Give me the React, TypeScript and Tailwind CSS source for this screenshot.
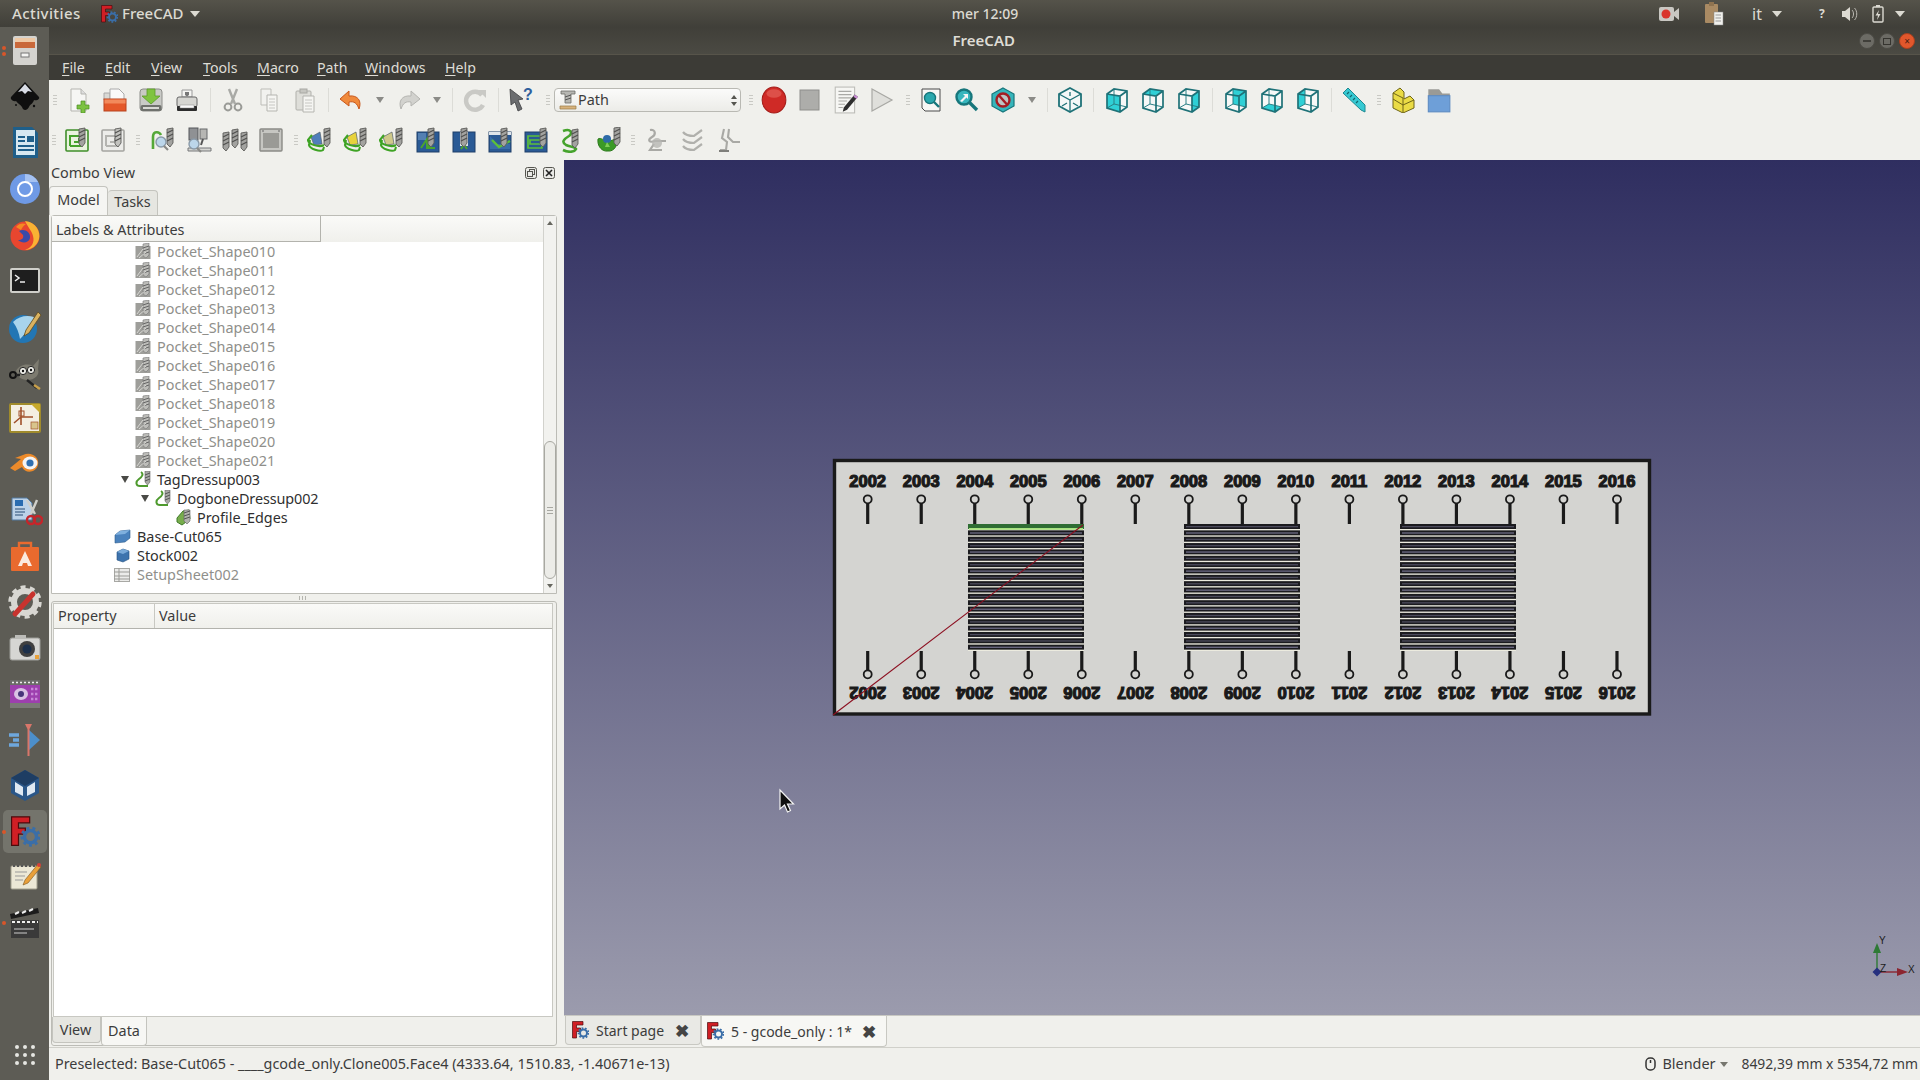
import type { ReactNode } from 'react';

const Svg = ({ size = 26, children }: { size?: number; children: ReactNode }) => (
    <svg width={size} height={size} viewBox="0 0 26 26">{children}</svg>
);

const DrillBit = ({ x = 16, y = 1, gray = '#a3a3a0' }: { x?: number; y?: number; gray?: string }) => (
    <g transform={`translate(${x} ${y})`}>
        <path d="M0 1 L6 0 L6 15 L3 19 L0 16 Z" fill={gray} stroke="#5c5c5a" strokeWidth="0.9" />
        <path d="M0 5 L6 2 M0 9 L6 6 M0 13 L6 10" stroke="#4f4f4d" strokeWidth="1.1" />
    </g>
);

const FcLogo = ({ size = 18 }: { size?: number }) => (
    <svg width={size} height={size} viewBox="0 0 36 36">
        <path d="M3 1 H24 V8 H11 V14 H19 V21 H11 V34 H3 Z" fill="#d01f25" stroke="#4a0c0e" strokeWidth="1.4" />
        <circle cx="25" cy="24" r="7" fill="none" stroke="#3a6ea8" strokeWidth="4" />
        <circle cx="25" cy="24" r="10" fill="none" stroke="#3a6ea8" strokeWidth="3.4" strokeDasharray="3.4 3.6" />
    </svg>
);

// toolbar row 1
const NewIco = () => (
    <Svg><path d="M5 2 H15 L20 7 V24 H5 Z" fill="#f6f6f4" stroke="#b5b5b0" /><path d="M15 2 V7 H20" fill="#ddd" stroke="#b5b5b0" /><path d="M15 14 H19 V18 H23 V22 H19 V26 H15 V22 H11 V18 H15 Z" fill="#7cc242" stroke="#4c8c22" strokeWidth="0.7" /></Svg>
);
const OpenIco = () => (
    <Svg><path d="M2 6 H8 V13 H2 Z" fill="#d9d9d5" stroke="#aaa" /><path d="M8 2 H17 L22 7 V13 H8 Z" fill="#fafafa" stroke="#aaa" /><rect x="2" y="12" width="22" height="12" fill="#e4582a" stroke="#b8431e" /><rect x="2.5" y="12.5" width="21" height="4" fill="#f28a5c" /></Svg>
);
const SaveIco = () => (
    <Svg><rect x="2" y="2" width="22" height="22" rx="3" fill="#c9cac6" stroke="#8d8e8a" /><rect x="2.5" y="18" width="21" height="6" rx="2" fill="#6f716d" /><rect x="5" y="20" width="16" height="2" fill="#d8d8d4" /><path d="M9 2 H17 V9 H22 L13 17 L4 9 H9 Z" fill="#7fc440" stroke="#5a9a28" strokeWidth="0.8" /></Svg>
);
const PrintIco = () => (
    <Svg><path d="M8 3 H18 V10 H8 Z" fill="#f5f5f3" stroke="#999" /><path d="M11 5 H15 V8 L13 9.5 L11 8 Z" fill="#777" /><rect x="3" y="10" width="20" height="10" rx="2" fill="#d6d6d2" stroke="#666" /><rect x="3" y="19" width="20" height="5" rx="1" fill="#2c2c2c" /><rect x="6" y="18" width="14" height="3" fill="#fafafa" stroke="#888" strokeWidth="0.5" /></Svg>
);
const CutIco = () => (
    <Svg><path d="M9 2 L15 17 M17 2 L11 17" stroke="#a9aaa6" strokeWidth="2.4" /><circle cx="8" cy="20" r="3.4" fill="none" stroke="#9a9b97" strokeWidth="2" /><circle cx="18" cy="20" r="3.4" fill="none" stroke="#9a9b97" strokeWidth="2" /></Svg>
);
const CopyIco = () => (
    <Svg><path d="M5 2 H15 V18 H5 Z" fill="#f2f2ef" stroke="#bdbdb8" /><path d="M11 8 H21 V24 H11 Z" fill="#f5f5f2" stroke="#b5b5b0" /><path d="M13 12 H19 M13 15 H19 M13 18 H19 M13 21 H19" stroke="#c6c6c2" /></Svg>
);
const PasteIco = () => (
    <Svg><rect x="4" y="4" width="15" height="19" rx="1" fill="#deded9" stroke="#b0b0ab" /><rect x="8" y="2" width="7" height="4" fill="#c6c6c1" stroke="#a8a8a3" /><path d="M11 9 H22 V25 H11 Z" fill="#f5f5f2" stroke="#b5b5b0" /><path d="M13 13 H20 M13 16 H20 M13 19 H20 M13 22 H20" stroke="#c6c6c2" /></Svg>
);
const UndoIco = ({ on }: { on?: boolean }) => (
    <Svg><path d="M11 4 L2 12 L11 19 V15 C16 14 19 16 21 22 C24 14 20 8 11 9 Z" fill={on ? '#f08a3c' : '#d2d2ce'} stroke={on ? '#c8561a' : '#b4b4b0'} /></Svg>
);
const RedoIco = () => (
    <Svg><path d="M15 4 L24 12 L15 19 V15 C10 14 7 16 5 22 C2 14 6 8 15 9 Z" fill="#d2d2ce" stroke="#b4b4b0" /></Svg>
);
const RefreshIco = () => (
    <Svg><path d="M20 8 A9 9 0 1 0 21 18" fill="none" stroke="#c9c9c5" strokeWidth="4.5" /><path d="M16 3 H24 V11 Z" fill="#c9c9c5" /></Svg>
);
const WhatIco = () => (
    <Svg><path d="M2 2 L15 12 L10 13 L14 22 L10 24 L7 15 L3 18 Z" fill="#6b6d6f" stroke="#3d3f41" strokeWidth="0.8" /><text x="15" y="13" fontSize="16" fontWeight="700" fill="#2f5f9c" fontFamily="'Liberation Sans', sans-serif">?</text></Svg>
);
const RecordIco = () => (
    <Svg size={28}><ellipse cx="13" cy="13" rx="11" ry="12" fill="#cf2a26" stroke="#a51d1a" /><ellipse cx="13" cy="7" rx="7" ry="4" fill="#e66a60" opacity="0.6" /></Svg>
);
const StopIco = () => (
    <Svg><rect x="3" y="3" width="19" height="20" fill="#adadaa" stroke="#8e8e8b" /></Svg>
);
const EditIco = () => (
    <Svg size={28}><rect x="3" y="1" width="18" height="24" fill="#f6f6f3" stroke="#bdbdb8" /><path d="M6 5 H18 M6 8 H18 M6 11 H18 M6 14 H14 M6 17 H12 M6 20 H10" stroke="#a9a9a5" /><path d="M21 8 L24 10 L14 22 L10 24 L11 20 Z" fill="#2e2e2e" /><path d="M21 8 L24 10 L23 12 L20 10 Z" fill="#c58ad0" /></Svg>
);
const PlayIco = () => (
    <Svg><path d="M3 2 L23 13 L3 24 Z" fill="#dfdfdb" stroke="#a8a8a4" strokeWidth="1.2" /></Svg>
);
const FitAllIco = () => (
    <Svg><path d="M4 2 H22 V24 H7 L4 21 Z" fill="#f7f7f5" stroke="#4a4a4a" /><circle cx="12" cy="11" r="5.5" fill="#2aa8ae" stroke="#17767b" strokeWidth="1.4" /><path d="M16 15 L21 20" stroke="#17767b" strokeWidth="2.4" /></Svg>
);
const FitSelIco = () => (
    <Svg><circle cx="10" cy="10" r="7.5" fill="#37b6bd" stroke="#17767b" strokeWidth="2.4" /><path d="M15 15 L23 23" stroke="#17767b" strokeWidth="3.4" /><path d="M6 14 L11 9 L9 7 H14 V12 L12.5 10.5 L8 15 Z" fill="#f4f4f4" /></Svg>
);
const DrawStyleIco = () => (
    <Svg><path d="M13 1 L24 7 V19 L13 25 L2 19 V7 Z" fill="#36b5bb" stroke="#17767b" strokeWidth="1.2" /><circle cx="13" cy="13" r="6.5" fill="#bfc4c4" stroke="#a51c22" strokeWidth="2.4" /><path d="M9 8.5 L17 17.5" stroke="#a51c22" strokeWidth="2.4" /></Svg>
);
type Face = 'none' | 'front' | 'top' | 'right' | 'rear' | 'bottom' | 'left';
const Cube = ({ face = 'none' }: { face?: Face }) => {
    const faces: Record<Face, string> = {
        none: '',
        front: '3,7 16,9 16,25 3,21',
        top: '3,7 10,2 23,4 16,9',
        right: '16,9 23,4 23,20 16,25',
        rear: '10,2 23,4 23,20 10,17',
        bottom: '3,21 10,17 23,20 16,25',
        left: '3,7 10,2 10,17 3,21',
    };
    return (
        <Svg>
            <path d="M3 7 L10 2 L23 4 V20 L16 25 L3 21 Z" fill="#f7f8f7" />
            {face !== 'none' && <polygon points={faces[face]} fill="#2fd0d6" />}
            <path d="M10 2 V17 L3 21 M10 17 L23 20" stroke="#2a8086" strokeWidth="1" fill="none" />
            <path d="M3 7 L10 2 L23 4 V20 L16 25 L3 21 Z M3 7 L16 9 L23 4 M16 9 V25" stroke="#1f7278" strokeWidth="1.7" fill="none" />
        </Svg>
    );
};
const IsoIco = () => (
    <Svg><path d="M13 1 L24 7 V19 L13 25 L2 19 V7 Z" fill="#f4f8f8" stroke="#1f7278" strokeWidth="1.8" /><path d="M2 7 L13 13 L24 7 M13 13 V25 M5 19 L10 16 M21 19 L16 16 M13 5 V9" stroke="#1f7278" strokeWidth="1.3" fill="none" /></Svg>
);
const MeasureIco = () => (
    <Svg><path d="M2 6 L7 1 L24 18 V25 L20 23 Z" fill="#36c9d3" stroke="#1d8890" /><path d="M6 7 L8 5 M9 10 L11 8 M12 13 L14 11 M15 16 L17 14" stroke="#14666c" strokeWidth="1.2" /></Svg>
);
const PartIco = () => (
    <Svg><path d="M4 6 L11 1 L15 5 V12 L21 9 L25 13 V21 L14 26 L4 21 Z" fill="#eadb45" stroke="#6e6518" /><path d="M4 12 L14 18 L25 13 M14 18 V26 M4 6 L14 11 V18" stroke="#6e6518" fill="none" /></Svg>
);
const FolderIco = () => (
    <Svg size={28}><path d="M4 3 H14 L17 7 H24 V12 H4 Z" fill="#9a9a96" /><rect x="4" y="9" width="20" height="15" fill="#6e9fd8" stroke="#5d8bc2" /></Svg>
);

// toolbar row 2
const JobIco = ({ on }: { on?: boolean }) => (
    <Svg>
        <rect x="2" y="3" width="22" height="21" rx="1" fill={on ? '#e9f3de' : '#ecece9'} stroke={on ? '#3f8e2a' : '#a4a4a0'} strokeWidth="1.6" />
        <path d="M6 19 V9 H16 M6 19 H17 M10 15 H15 V11" fill="none" stroke={on ? '#45a32c' : '#b4b4b0'} strokeWidth="2" />
        <DrillBit x={15} y={1} gray={on ? '#a3a3a0' : '#c2c2be'} />
    </Svg>
);
const Glass = ({ x = 10, y = 16 }: { x?: number; y?: number }) => (
    <g>
        <circle cx={x} cy={y} r="5" fill="#bcd6ea" stroke="#8a9aa8" strokeWidth="1.4" />
        <path d={`M${x + 3} ${y + 4} L${x + 7} ${y + 8}`} stroke="#8a8a86" strokeWidth="2.2" />
    </g>
);
const InspectIco = () => (
    <Svg><path d="M3 22 V10 C3 4 9 4 11 8" fill="none" stroke="#54a838" strokeWidth="2.6" /><DrillBit x={17} y={1} /><Glass x={11} y={15} /></Svg>
);
const MachineIco = () => (
    <Svg><rect x="3" y="1" width="9" height="12" fill="#8f9194" stroke="#55575a" /><rect x="14" y="2" width="7" height="10" fill="#b6b6b3" stroke="#66686b" /><path d="M17 12 L15 18" stroke="#555" strokeWidth="2" /><path d="M2 24 H25 V21 H2 Z" fill="#d6d6d2" stroke="#77787a" /><Glass x={8} y={17} /></Svg>
);
const ToolsIco = () => (
    <Svg><DrillBit x={1} y={5} /><DrillBit x={10} y={2} /><DrillBit x={19} y={5} /></Svg>
);
const StockIco = () => (
    <Svg><rect x="2" y="2" width="22" height="22" rx="1" fill="#c6c6c2" stroke="#8a8a86" strokeWidth="1.4" /><rect x="5" y="6" width="16" height="15" fill="#9a9a96" /><path d="M4 4 H6 M20 4 H22" stroke="#666" /></Svg>
);
const StackIco = ({ fill }: { fill: string }) => (
    <Svg>
        <path d="M4 10 L13 5 L15 17 L7 18 Z" fill={fill} stroke="#55606a" strokeWidth="0.7" />
        <path d="M3 13 L2 18 C3 22 13 25 16 23 L17 20 M5 8 L1 13 C1 17 12 21 17 18" fill="none" stroke="#3ea324" strokeWidth="2.1" />
        <DrillBit x={17} y={1} />
    </Svg>
);
const BlueIco = ({ children }: { children: ReactNode }) => (
    <Svg><rect x="2" y="5" width="22" height="20" fill="#2a5a95" stroke="#1e3f68" />{children}</Svg>
);
const LoopIco = () => (
    <Svg><path d="M6 3 C12 2 12 8 8 10 C3 13 5 16 11 14 H22 M10 17 L6 23 H18" fill="none" stroke="#a9a9a5" strokeWidth="2.2" /><circle cx="13" cy="16" r="5" fill="#b7b7b3" opacity="0.8" /></Svg>
);
const LayersIco = () => (
    <Svg><path d="M3 5 C6 9 12 9 14 9 L22 3 M3 12 C6 16 12 16 14 16 L22 10 M3 19 C6 23 12 23 14 23 L22 17" fill="none" stroke="#b0b0ac" strokeWidth="2.2" /></Svg>
);
const BendIco = () => (
    <Svg><path d="M8 2 L6 11 L11 15 L10 23 H4 M13 2 L12 10 L17 15 H24" fill="none" stroke="#a9a9a5" strokeWidth="2.1" /><path d="M3 24 H13" stroke="#7f7f7b" strokeWidth="2" /></Svg>
);

const Tool = ({ children }: { children: ReactNode }) => (
    <div className="w-9 h-10 flex items-center justify-center shrink-0">{children}</div>
);
const Sep = ({ w = 'w-[10px]' }: { w?: string }) => (
    <div className={`${w} h-10 flex items-center justify-center shrink-0`}><div className="w-px h-[24px] bg-[#dcdcd7]" /></div>
);
const Drop = ({ w }: { w: string }) => (
    <div className={`${w} h-10 flex items-center justify-center shrink-0`}>
        <div className="w-0 h-0 border-l-[4px] border-r-[4px] border-t-[6px] border-l-transparent border-r-transparent border-t-[#8b8b87]" />
    </div>
);
const Grip = ({ w }: { w: string }) => (
    <div className={`${w} h-10 flex flex-col items-center justify-center gap-[2px] shrink-0`}>
        <div className="w-[4px] h-px bg-[#c9c9c4]" />
        <div className="w-[4px] h-px bg-[#c9c9c4]" />
        <div className="w-[4px] h-px bg-[#c9c9c4]" />
        <div className="w-[4px] h-px bg-[#c9c9c4]" />
    </div>
);

// dock
const DockSvg = ({ children }: { children: ReactNode }) => (
    <svg width="36" height="36" viewBox="0 0 36 36">{children}</svg>
);
const dockIcons: ReactNode[] = [
    <DockSvg key="files"><rect x="6" y="3" width="24" height="29" rx="2" fill="#d4d3cf" /><rect x="8" y="5" width="20" height="10" fill="#c9683a" /><rect x="8" y="5" width="20" height="4" fill="#efc9a5" /><rect x="14" y="20" width="8" height="4" fill="#f4f4f2" stroke="#777" /></DockSvg>,
    <DockSvg key="inkscape"><path d="M18 3 L32 18 C33 20 30 22 27 21 C26 25 23 25 22 28 C20 32 16 32 15 28 C13 25 11 25 9 22 C6 23 3 20 4 18 Z" fill="#0f0f0f" /><path d="M18 5 L25 13 L21 12 L18 15 L15 12 L11 13 Z" fill="#d9dde6" /><circle cx="9" cy="26" r="1" fill="#0f0f0f" /><circle cx="27" cy="27" r="1.2" fill="#0f0f0f" /></DockSvg>,
    <DockSvg key="writer"><path d="M6 2 H25 L31 8 V33 H6 Z" fill="#1f5f8a" /><rect x="9" y="5" width="19" height="25" fill="#d7e8f1" /><path d="M11 12 H18 M11 16 H18 M11 21 H27 M11 25 H27" stroke="#1f5f8a" strokeWidth="2" /><rect x="20" y="11" width="7" height="6" fill="#1f5f8a" /></DockSvg>,
    <DockSvg key="chromium"><circle cx="18" cy="18" r="15" fill="#6f9ae6" /><path d="M18 3 A15 15 0 0 1 31 11 H18 Z" fill="#a5c2f2" /><circle cx="18" cy="18" r="7" fill="#6f9ae6" stroke="#fff" strokeWidth="2" /></DockSvg>,
    <DockSvg key="firefox"><circle cx="18" cy="19" r="14.5" fill="#e8462f" /><path d="M18 4 C29 5 34 15 32 22 C30 29 24 33 18 33 C24 31 28 26 26 19 C25 14 22 12 18 4 Z" fill="#f9b233" /><path d="M12 14 C17 11 24 15 23 21 C22 26 15 27 11 23 C15 23 17 21 16 18 Z" fill="#3a4aa8" /><path d="M9 10 C12 6 16 6 19 7 C16 9 15 11 14 13 Z" fill="#f58a22" /></DockSvg>,
    <DockSvg key="terminal"><rect x="4" y="6" width="28" height="23" rx="1" fill="#1e1e1e" stroke="#cfcfca" strokeWidth="2" /><path d="M8 12 L12 15 L8 18" fill="none" stroke="#eee" strokeWidth="1.5" /><path d="M13 19 H18" stroke="#eee" strokeWidth="1.5" /></DockSvg>,
    <DockSvg key="scribus"><circle cx="16" cy="20" r="14" fill="#2276b4" /><path d="M6 13 C12 7 20 6 27 8 C25 17 19 24 13 30 C12 24 10 18 6 13 Z" fill="#a8d4ec" /><path d="M31 3 L34 6 L22 24 L17 27 L19 21 Z" fill="#d9b261" stroke="#5d4a20" strokeWidth="0.8" /></DockSvg>,
    <DockSvg key="gimp"><path d="M9 16 C12 10 20 8 26 11 L32 4 L31 14 C33 20 28 25 20 25 C14 25 10 21 9 16 Z" fill="#7d7b70" /><circle cx="16" cy="16" r="3.6" fill="#f0f0ea" stroke="#222" /><circle cx="24" cy="15" r="3.6" fill="#f0f0ea" stroke="#222" /><circle cx="16" cy="16" r="1.2" fill="#111" /><circle cx="24" cy="15" r="1.2" fill="#111" /><circle cx="6" cy="20" r="3" fill="none" stroke="#111" strokeWidth="2" /><path d="M9 20 H13 M20 25 L30 33" stroke="#222" strokeWidth="2.4" fill="none" /><path d="M27 30 L33 34" stroke="#c9a04a" strokeWidth="2.4" /></DockSvg>,
    <DockSvg key="kicad"><rect x="3" y="3" width="30" height="28" rx="1" fill="#f4efe2" stroke="#a08b2c" strokeWidth="2" /><path d="M24 3 H33 V12 Z" fill="#c7a92c" /><path d="M14 6 V24 M14 16 L7 22 M14 16 H26" stroke="#a0502a" strokeWidth="1.6" fill="none" /><rect x="12" y="10" width="5" height="5" fill="none" stroke="#a0502a" /><rect x="24" y="21" width="7" height="7" fill="#d8c48c" stroke="#a0502a" strokeWidth="0.7" /></DockSvg>,
    <DockSvg key="blender"><path d="M3 22 L14 13 L8 12 L16 9 C24 5 33 11 31 19 C29 27 18 28 15 21 L8 25 Z" fill="#ec8a2a" /><ellipse cx="23" cy="17" rx="7.5" ry="6.5" fill="#f4f4f4" /><circle cx="23" cy="17" r="3.6" fill="#2f6fb0" /></DockSvg>,
    <DockSvg key="diff"><path d="M5 6 H20 L25 11 V28 H5 Z" fill="#bcd2e8" stroke="#52799f" /><rect x="8" y="8" width="8" height="6" fill="#2a6cb0" /><path d="M8 17 H18 M8 20 H18 M8 23 H16" stroke="#5a7a9a" strokeWidth="1.6" /><path d="M20 8 L28 22 M30 8 L24 22" stroke="#cfcfca" strokeWidth="2.4" /><circle cx="24" cy="28" r="4" fill="none" stroke="#c5252a" strokeWidth="2.4" /><circle cx="31" cy="28" r="4" fill="none" stroke="#c5252a" strokeWidth="2.4" /></DockSvg>,
    <DockSvg key="software"><rect x="4" y="9" width="28" height="24" rx="1" fill="#e96a2e" /><path d="M12 9 V5 H24 V9" fill="none" stroke="#e96a2e" strokeWidth="2.4" /><path d="M18 13 L25 28 H21 L20 25 H16 L15 28 H11 Z" fill="#fbe9df" /></DockSvg>,
    <DockSvg key="settings"><circle cx="18" cy="18" r="11" fill="none" stroke="#d8d7d2" strokeWidth="6" /><circle cx="18" cy="18" r="15" fill="none" stroke="#d8d7d2" strokeWidth="3.4" strokeDasharray="5 4.4" /><path d="M8 30 L26 10" stroke="#c8332e" strokeWidth="5" strokeLinecap="round" /></DockSvg>,
    <DockSvg key="camera"><rect x="3" y="8" width="30" height="22" rx="2" fill="#d6d6d3" stroke="#9d9d99" /><rect x="8" y="5" width="11" height="4" fill="#bcbcb8" /><circle cx="20" cy="19" r="8" fill="#3f3f3f" /><circle cx="20" cy="19" r="4.5" fill="#1c2f4a" /><rect x="28" y="25" width="4" height="4" fill="#e8a13a" /></DockSvg>,
    <DockSvg key="video"><rect x="3" y="4" width="30" height="28" rx="1" fill="#9d3fae" /><rect x="3" y="4" width="30" height="5" fill="#6b6b68" /><rect x="3" y="27" width="30" height="5" fill="#7a7a76" /><path d="M5 6.5 H31" stroke="#eee" strokeWidth="1.6" strokeDasharray="2 2" /><ellipse cx="14" cy="18" rx="7" ry="6" fill="#d9c2e4" /><circle cx="14" cy="18" r="3" fill="#47357a" /><path d="M24 13 H31 M24 18 H31 M24 23 H31" stroke="#c888d8" strokeWidth="2.4" strokeDasharray="2.4 1.6" /></DockSvg>,
    <DockSvg key="etcher"><path d="M2 13 H12 M6 18 H12 M2 23 H12" stroke="#6ea7dd" strokeWidth="3.6" /><path d="M22 8 L33 18 L22 28 Z" fill="#4c8fcb" /><path d="M18 2 H25 L22.5 7 V34 H20.5 V7 Z" fill="#d9766a" /></DockSvg>,
    <DockSvg key="vbox"><path d="M18 2 L32 10 V25 L18 33 L4 25 V10 Z" fill="#2a5688" /><path d="M18 2 L32 10 L18 18 L4 10 Z" fill="#1e3d63" /><path d="M8 14 L16 19 V28 L8 24 Z M28 14 L20 19 V28 L28 24 Z" fill="#dfe8f2" /></DockSvg>,
    <div key="freecad" className="w-[44px] h-[43px] rounded-[5px] bg-[#74746c] flex items-center justify-center"><FcLogo size={31} /></div>,
    <DockSvg key="notes"><rect x="4" y="7" width="26" height="23" rx="1" fill="#ece8d6" stroke="#a3a08f" /><path d="M6 7 H29" stroke="#555" strokeWidth="2" strokeDasharray="2 2" /><path d="M8 13 H20 M8 17 H18 M8 21 H16" stroke="#999" /><path d="M31 5 L34 8 L21 24 L16 26 L18 21 Z" fill="#e9a03a" stroke="#7a5420" strokeWidth="0.6" /><circle cx="32" cy="6" r="2" fill="#d5403a" /></DockSvg>,
    <DockSvg key="clapper"><path d="M3 9 L31 3 L32 8 L4 14 Z" fill="#1c1c1c" /><path d="M8 9 L12 7 M15 8 L19 6 M22 6 L26 4" stroke="#eee" strokeWidth="2" /><rect x="4" y="15" width="28" height="18" fill="#3a3a3a" /><path d="M5 17 H31" stroke="#eee" strokeWidth="2" strokeDasharray="3 2" /><path d="M7 24 H27 M7 28 H20" stroke="#ccc" /></DockSvg>,
];

const menus = [
    { label: 'File', cls: 'w-[43px]' },
    { label: 'Edit', cls: 'w-[46px]' },
    { label: 'View', cls: 'w-[52px]' },
    { label: 'Tools', cls: 'w-[54px]' },
    { label: 'Macro', cls: 'w-[60px]' },
    { label: 'Path', cls: 'w-[48px]' },
    { label: 'Windows', cls: 'w-[80px]' },
    { label: 'Help', cls: 'w-[40px]' },
];

const PocketIcon = () => (
    <svg width="16" height="17" viewBox="0 0 16 17">
        <rect x="0.5" y="3" width="15" height="13" fill="#9e9e9a" />
        <path d="M8 1 L14 0 V12 L11 15 L8 13 Z" fill="#bdbdb9" stroke="#777" strokeWidth="0.6" />
        <path d="M8 5 L14 3 M8 8 L14 6 M8 11 L14 9" stroke="#666" />
        <path d="M2 14 L8 6 M4 15 L11 9" stroke="#d8d8d4" />
    </svg>
);
const DressIcon = () => (
    <svg width="16" height="18" viewBox="0 0 16 18">
        <path d="M6 1 C9 3 7 6 4 8 C0 11 1 15 5 15 H13" fill="none" stroke="#4e9a2e" strokeWidth="2" />
        <path d="M10 0 H15 V11 L12.5 14 L10 11 Z" fill="#a9a9a6" stroke="#666" strokeWidth="0.6" />
        <path d="M10 4 L15 2 M10 7 L15 5 M10 10 L15 8" stroke="#555" />
    </svg>
);
const ProfileIcon = () => (
    <svg width="16" height="18" viewBox="0 0 16 18">
        <path d="M2 9 L8 2 L14 1 L15 10 L7 16 L2 13 Z" fill="#78ad4d" stroke="#3f7a28" />
        <path d="M9 1 H15 V12 L12 15 L9 12 Z" fill="#b2b2ae" stroke="#666" strokeWidth="0.6" />
        <path d="M9 4 L15 2 M9 7 L15 5 M9 10 L15 8" stroke="#555" />
    </svg>
);
const SlabIcon = () => (
    <svg width="17" height="15" viewBox="0 0 17 15">
        <path d="M1 6 L6 2 L16 1 V9 L11 13 L1 14 Z" fill="#4a82bd" stroke="#2c5a8c" strokeWidth="0.6" />
        <path d="M1 6 L6 2 L16 1 L11 5 Z" fill="#7fb0de" />
    </svg>
);
const BlockIcon = () => (
    <svg width="14" height="15" viewBox="0 0 14 15">
        <path d="M1 4 L7 1 L13 3 V11 L7 14 L1 12 Z" fill="#3d73ad" stroke="#27527f" strokeWidth="0.6" />
        <path d="M1 4 L7 1 L13 3 L7 6 Z" fill="#79a9d8" />
    </svg>
);
const SheetIcon = () => (
    <svg width="16" height="14" viewBox="0 0 16 14">
        <rect x="0.5" y="0.5" width="15" height="13" fill="#ececea" stroke="#a8a8a4" />
        <path d="M0 4 H16 M0 8 H16 M0 11 H16 M5 0 V14" stroke="#9b9b97" />
    </svg>
);

const pockets = ['010', '011', '012', '013', '014', '015', '016', '017', '018', '019', '020', '021'];

const Arrow = () => (
    <div className="w-0 h-0 border-l-[4px] border-r-[4px] border-t-[7px] border-l-transparent border-r-transparent border-t-[#4a4a46]" />
);

const SCALE_X = 53.52;
const years = Array.from({ length: 15 }, (_, i) => ({ year: 2002 + i, x: 867.7 + i * SCALE_X }));
const blocks = [968, 1184, 1400];
const stripes = Array.from({ length: 20 }, (_, i) => 524 + i * 6.35);

const Viewport = () => (
    <svg className="block w-full h-full" viewBox="564 160 1356 855">
        <defs>
            <linearGradient id="viewbg" x1="0" y1="0" x2="0" y2="1">
                <stop offset="0" stopColor="#2f2e60" />
                <stop offset="1" stopColor="#9b9bad" />
            </linearGradient>
        </defs>
        <rect x="564" y="160" width="1356" height="855" fill="url(#viewbg)" />
        <rect x="834.5" y="460.5" width="815" height="253.5" fill="#d4d4d1" stroke="#1a1a1a" strokeWidth="3.4" />
        {blocks.map((bx, b) => (
            <g key={bx}>
                <rect x={bx} y={524} width={116} height={127} fill="#ecebdf" />
                {stripes.map((sy, i) => (
                    <g key={sy}>
                        <rect x={bx} y={sy} width={116} height={5} fill={b === 0 && i === 0 ? '#2f6d34' : '#1b1b1f'} />
                        {b === 0 && i === 0 ? (
                            <rect x={bx + 1} y={sy + 4} width={114} height={1.8} fill="#a6e27e" />
                        ) : (
                            <rect x={bx + 2} y={sy + 2} width={112} height={1.3} fill={i % 3 === 1 ? '#6e6c86' : '#4c4b5c'} />
                        )}
                    </g>
                ))}
            </g>
        ))}
        {years.map(({ year, x }) => (
            <g key={year}>
                <line x1={x} y1={503} x2={x} y2={524} stroke="#1a1a1a" strokeWidth="3.2" />
                <line x1={x} y1={651} x2={x} y2={670} stroke="#1a1a1a" strokeWidth="3.2" />
                <circle cx={x} cy={499.3} r={4} fill="#d4d4d1" stroke="#1a1a1a" strokeWidth="1.8" />
                <circle cx={x} cy={674.3} r={4} fill="#d4d4d1" stroke="#1a1a1a" strokeWidth="1.8" />
                <text x={x} y={486.5} textAnchor="middle" fontSize="16.5" fontWeight="700" fill="#1a1a1a" stroke="#1a1a1a" strokeWidth="1.2" fontFamily="'Liberation Sans', sans-serif">{year}</text>
                <text x={x} y={699} textAnchor="middle" fontSize="16.5" fontWeight="700" fill="#1a1a1a" stroke="#1a1a1a" strokeWidth="1.2" fontFamily="'Liberation Sans', sans-serif" transform={`rotate(180 ${x} 693)`}>{year}</text>
            </g>
        ))}
        <line x1="833" y1="715" x2="1083" y2="525" stroke="#8c0f20" strokeWidth="1.1" />
        {/* axis cross */}
        <g fontFamily="'Liberation Sans', sans-serif" fontSize="10" fill="#1c1c1c">
            <line x1="1877" y1="972" x2="1877" y2="948" stroke="#2e7a35" strokeWidth="1.4" />
            <path d="M1877 943 L1881 953 H1873 Z" fill="#2e7a35" />
            <line x1="1877" y1="972" x2="1900" y2="972" stroke="#8c2530" strokeWidth="1.4" />
            <path d="M1908 972 L1897 976 V968 Z" fill="#8c2530" />
            <path d="M1877 967.5 L1881.5 972 L1877 976.5 L1872.5 972 Z" fill="#26307f" />
            <text x="1879" y="944">Y</text>
            <text x="1908" y="973">X</text>
            <text x="1880" y="972">Z</text>
        </g>
        {/* pointer */}
        <path d="M780 790 V809 L784.5 805 L787.5 812 L790.5 810.5 L787.5 804 H793.5 Z" fill="#111" stroke="#f4f4f4" strokeWidth="1.2" />
    </svg>
);

export default function App() {
    const ui = "font-['Noto_Sans',sans-serif]";
    return (
        <div className={`w-[1920px] h-[1080px] flex flex-col overflow-hidden bg-[#f0f0ec] ${ui}`}>
            {/* gnome top bar */}
            <div className="h-[27px] shrink-0 flex items-center bg-gradient-to-b from-[#55534a] to-[#403f39] text-[#dcdad2] text-[15px]">
                <div className="w-[920px] flex items-center shrink-0">
                    <span className="ml-[12px] w-[88px] font-medium tracking-[0.4px]">Activities</span>
                    <FcLogo size={18} />
                    <span className="ml-[4px] font-medium">FreeCAD</span>
                    <div className="ml-[6px] w-0 h-0 border-l-[5px] border-r-[5px] border-t-[6px] border-l-transparent border-r-transparent border-t-[#dcdad2]" />
                </div>
                <div className="w-[130px] text-center font-medium text-[14px] shrink-0">mer 12:09</div>
                <div className="flex-1 flex items-center">
                    {/* camera */}
                    <svg className="ml-[609px]" width="20" height="16" viewBox="0 0 20 16">
                        <rect x="0" y="1" width="15" height="14" rx="2" fill="#c9c7c2" />
                        <circle cx="7" cy="8" r="4.5" fill="#d9342b" />
                        <path d="M15 6 L20 2 V14 L15 10 Z" fill="#c9c7c2" />
                    </svg>
                    <svg className="ml-[25px]" width="20" height="24" viewBox="0 0 20 24">
                        <rect x="1" y="2" width="13" height="19" rx="1" fill="#a98a63" />
                        <rect x="5" y="0" width="5" height="4" fill="#8f7350" />
                        <rect x="10" y="10" width="9" height="13" fill="#f0f0ec" stroke="#888" strokeWidth="0.5" />
                        <path d="M11.5 13 H17 M11.5 16 H17 M11.5 19 H17" stroke="#999" />
                    </svg>
                    <span className="ml-[28px] w-[14px] text-[16px]">it</span>
                    <div className="ml-[6px] w-0 h-0 border-l-[5px] border-r-[5px] border-t-[6px] border-l-transparent border-r-transparent border-t-[#dcdad2]" />
                    <span className="ml-[37px] text-[12px] font-bold">?</span>
                    <svg className="ml-[17px]" width="16" height="16" viewBox="0 0 16 16">
                        <path d="M0 5 H3 L8 1 V15 L3 11 H0 Z" fill="#dcdad2" />
                        <path d="M10 4 C12 6 12 10 10 12 M12.5 2 C15.5 5 15.5 11 12.5 14" fill="none" stroke="#bdbbb4" />
                    </svg>
                    <svg className="ml-[14px]" width="12" height="19" viewBox="0 0 12 19">
                        <rect x="1" y="3" width="10" height="15" rx="1" fill="none" stroke="#dcdad2" strokeWidth="1.4" />
                        <rect x="4" y="1" width="4" height="2" fill="#dcdad2" />
                        <path d="M7 6 L3.5 11.5 H6 L5 16 L8.5 10 H6 Z" fill="#dcdad2" />
                    </svg>
                    <div className="ml-[11px] w-0 h-0 border-l-[5px] border-r-[5px] border-t-[6px] border-l-transparent border-r-transparent border-t-[#dcdad2]" />
                </div>
            </div>

            <div className="flex-1 min-h-0 flex">
                {/* launcher */}
                <div className="w-[49px] shrink-0 bg-[#5d5c55] flex flex-col items-center pt-[1.5px]">
                    {dockIcons.map((icon, i) => (
                        <div key={i} className="relative w-full h-[45.9px] flex items-center justify-center shrink-0">
                            {i === 0 && (
                                <div className="absolute left-[2px] top-[17px] flex flex-col gap-[2px]">
                                    <div className="w-[4px] h-[4px] rounded-full bg-[#d8562a]" />
                                    <div className="w-[4px] h-[4px] rounded-full bg-[#d8562a]" />
                                </div>
                            )}
                            {(i === 17 || i === 19) && (
                                <div className="absolute left-[2px] top-[21px] w-[4px] h-[4px] rounded-full bg-[#d8562a]" />
                            )}
                            {icon}
                        </div>
                    ))}
                    <div className="mt-[99px] grid grid-cols-3 gap-[4px]">
                        {Array.from({ length: 9 }, (_, i) => (
                            <div key={i} className="w-[4px] h-[4px] rounded-full bg-[#e6e6e2]" />
                        ))}
                    </div>
                </div>

                <div className="flex-1 min-w-0 flex flex-col">
                    {/* window title */}
                    <div className="h-[28px] shrink-0 relative flex items-center bg-gradient-to-b from-[#403f39] to-[#4b4a43] border-b border-[#57544a]">
                        <div className="w-[1871px] pr-[935px] pl-0 flex justify-end">
                            <span className="text-[15px] font-semibold text-[#dedcd5] -mr-[30px]">FreeCAD</span>
                        </div>
                        <div className="absolute right-[5px] top-[6px] flex gap-[4px]">
                            <div className="w-[16px] h-[16px] rounded-full bg-[#6c6b65] border border-[#4d4c46] flex items-center justify-center">
                                <div className="w-[8px] h-[2px] bg-[#403f3a]" />
                            </div>
                            <div className="w-[16px] h-[16px] rounded-full bg-[#6c6b65] border border-[#4d4c46] flex items-center justify-center">
                                <div className="w-[8px] h-[7px] border border-[#35342f]" />
                            </div>
                            <div className="w-[16px] h-[16px] rounded-full bg-[#e2572c] border border-[#a8401f] flex items-center justify-center text-[10px] leading-none text-[#4a2014]">×</div>
                        </div>
                    </div>

                    {/* menu bar */}
                    <div className="h-[25px] shrink-0 flex items-center bg-[#3c3b36] text-[#dfddd6] text-[14.2px] pl-[13px]">
                        {menus.map((m) => (
                            <div key={m.label} className={m.cls}>
                                <span className="underline underline-offset-2 decoration-1">{m.label[0]}</span>{m.label.slice(1)}
                            </div>
                        ))}
                    </div>

                    {/* toolbars */}
                    <div className="h-10 shrink-0 flex items-center">
                        <Grip w="w-[12px]" />
                        <Tool><NewIco /></Tool><Tool><OpenIco /></Tool><Tool><SaveIco /></Tool><Tool><PrintIco /></Tool>
                        <Sep />
                        <Tool><CutIco /></Tool><Tool><CopyIco /></Tool><Tool><PasteIco /></Tool>
                        <Sep />
                        <Tool><UndoIco on /></Tool><Drop w="w-[22px]" /><Tool><RedoIco /></Tool><Drop w="w-[20px]" />
                        <Sep />
                        <Tool><RefreshIco /></Tool>
                        <Sep />
                        <Tool><WhatIco /></Tool>
                        <div className="ml-[3px]"><Grip w="w-[12px]" /></div>
                        <div className="w-[187px] h-[24px] shrink-0 flex items-center rounded-[4px] border border-[#b9b9b3] bg-gradient-to-b from-[#fbfbfa] to-[#ecece8] pl-[4px] pr-[3px] text-[14.4px] text-[#3c3c3c]">
                            <svg width="18" height="20" viewBox="0 0 18 20">
                                <path d="M2 1 H16 V4 H12 V13 H6 V4 H2 Z" fill="#b6b6b2" stroke="#6a6a66" strokeWidth="0.8" />
                                <path d="M6 7 L12 5 M6 10 L12 8" stroke="#555" />
                                <path d="M1 16 H17 V19 H1 Z" fill="#d7b27c" stroke="#9a7a46" strokeWidth="0.7" />
                            </svg>
                            <span className="ml-[1px] flex-1">Path</span>
                            <div className="flex flex-col gap-[3px]">
                                <div className="w-0 h-0 border-l-[3px] border-r-[3px] border-b-[4px] border-l-transparent border-r-transparent border-b-[#55554f]" />
                                <div className="w-0 h-0 border-l-[3px] border-r-[3px] border-t-[4px] border-l-transparent border-r-transparent border-t-[#55554f]" />
                            </div>
                        </div>
                        <div className="ml-[4px]"><Grip w="w-[11px]" /></div>
                        <Tool><RecordIco /></Tool><Tool><StopIco /></Tool><Tool><EditIco /></Tool><Tool><PlayIco /></Tool>
                        <div className="ml-[2px]"><Grip w="w-[11px]" /></div>
                        <Tool><FitAllIco /></Tool><Tool><FitSelIco /></Tool><Tool><DrawStyleIco /></Tool><Drop w="w-[21px]" />
                        <Sep />
                        <Tool><IsoIco /></Tool>
                        <Sep w="w-[11px]" />
                        <Tool><Cube face="front" /></Tool><Tool><Cube face="top" /></Tool><Tool><Cube face="right" /></Tool>
                        <Sep w="w-[11px]" />
                        <Tool><Cube face="rear" /></Tool><Tool><Cube face="bottom" /></Tool><Tool><Cube face="left" /></Tool>
                        <Sep />
                        <Tool><MeasureIco /></Tool>
                        <div className="ml-[1px]"><Grip w="w-[11px]" /></div>
                        <Tool><PartIco /></Tool><Tool><FolderIco /></Tool>
                    </div>
                    <div className="h-10 shrink-0 flex items-center">
                        <Grip w="w-[10px]" />
                        <Tool><JobIco on /></Tool><Tool><JobIco /></Tool>
                        <Grip w="w-[14px]" />
                        <Tool><InspectIco /></Tool><Tool><MachineIco /></Tool><Tool><ToolsIco /></Tool><Tool><StockIco /></Tool>
                        <Grip w="w-[13px]" />
                        <Tool><StackIco fill="#4f7fbb" /></Tool><Tool><StackIco fill="#e8d23c" /></Tool><Tool><StackIco fill="#cfc98a" /></Tool>
                        <Tool><BlueIco><path d="M6 21 L12 12 V21 H20 M12 21 L18 15" fill="none" stroke="#4aa52e" strokeWidth="2" /><rect x="3" y="6" width="8" height="7" fill="#7ea6cf" opacity="0.5" /><DrillBit x={13} y={1} /></BlueIco></Tool>
                        <Tool><BlueIco><rect x="9" y="5" width="8" height="14" fill="#d7dfe6" /><path d="M10 22 L13 18 L16 22" stroke="#4aa52e" strokeWidth="2" fill="none" /><DrillBit x={10} y={1} /></BlueIco></Tool>
                        <Tool><BlueIco><path d="M3 9 V22 H23 V17 L10 17 Z" fill="#3a6ea8" /><path d="M5 13 L12 20 L23 14" fill="none" stroke="#5cc03a" strokeWidth="2.4" /><rect x="2" y="5" width="22" height="3" fill="#dfe5ea" /><DrillBit x={14} y={1} /></BlueIco></Tool>
                        <Tool><BlueIco><path d="M5 9 H19 V13 H7 V17 H19 V21 H5 Z" fill="none" stroke="#5cc03a" strokeWidth="1.7" /><DrillBit x={17} y={1} /></BlueIco></Tool>
                        <Tool><Svg><path d="M4 4 C12 1 14 6 10 9 C5 12 2 15 7 18 C11 20 15 19 17 22 C15 26 8 25 4 23" fill="none" stroke="#45a32c" strokeWidth="2.6" /><DrillBit x={13} y={2} /></Svg></Tool>
                        <Tool><Svg><path d="M3 12 C6 10 9 14 13 14 C17 14 19 12 21 12 C24 17 19 25 13 24 C7 25 2 19 3 12 Z" fill="#3b9a26" stroke="#2c7a1c" /><circle cx="12" cy="12" r="4" fill="#2e6aa8" /><path d="M12 15 L10 20 H15 Z" fill="#7fce58" /><DrillBit x={19} y={0} /></Svg></Tool>
                        <Grip w="w-[13px]" />
                        <Tool><LoopIco /></Tool><Tool><LayersIco /></Tool><Tool><BendIco /></Tool>
                    </div>

                    <div className="flex-1 min-h-0 flex">
                        {/* combo view */}
                        <div className="w-[515px] shrink-0 flex flex-col text-[14.4px] text-[#3c3c3c]">
                            <div className="h-[26px] shrink-0 flex items-center pl-[2px] pr-[9px]">
                                <span className="flex-1">Combo View</span>
                                <svg className="mr-[6px]" width="12" height="12" viewBox="0 0 12 12">
                                    <rect x="0.5" y="0.5" width="11" height="11" rx="2" fill="#e9e9e5" stroke="#55554f" />
                                    <rect x="4.5" y="2.5" width="5" height="5" fill="none" stroke="#55554f" />
                                    <rect x="2.5" y="4.5" width="5" height="5" fill="#e9e9e5" stroke="#55554f" />
                                </svg>
                                <svg width="12" height="12" viewBox="0 0 12 12">
                                    <rect x="0.5" y="0.5" width="11" height="11" rx="2" fill="#e9e9e5" stroke="#55554f" />
                                    <path d="M3 3 L9 9 M9 3 L3 9" stroke="#222" strokeWidth="1.6" />
                                </svg>
                            </div>
                            <div className="h-[29px] shrink-0 flex items-end">
                                <div className="w-[59px] h-[29px] pb-[2px] flex items-center justify-center rounded-t-[4px] border border-b-0 border-[#c4c4be] bg-[#f5f5f2]">Model</div>
                                <div className="w-[50px] h-[25px] pb-[2px] flex items-center justify-center rounded-t-[4px] border border-b-0 border-l-0 border-[#c4c4be] bg-[#e6e6e1]">Tasks</div>
                            </div>
                            {/* tree */}
                            <div className="ml-[2px] w-[506px] h-[379px] shrink-0 flex border border-[#bcbcb6] rounded-t-[3px] bg-white">
                                <div className="w-[492px] flex flex-col">
                                    <div className="h-[26px] shrink-0 flex bg-gradient-to-b from-[#fafaf8] to-[#f0f0ec]">
                                        <div className="w-[269px] flex items-center pl-[4px] pt-[2px] border-r border-b border-[#b3b3ad]">Labels &amp; Attributes</div>
                                    </div>
                                    {pockets.map((p) => (
                                        <div key={p} className="h-[19px] flex items-center pl-[83px] text-[#8f8f8b]">
                                            <PocketIcon />
                                            <span className="ml-[6px]">Pocket_Shape{p}</span>
                                        </div>
                                    ))}
                                    <div className="h-[19px] flex items-center pl-[69px] text-[#2f2f2f]">
                                        <Arrow />
                                        <div className="ml-[6px]"><DressIcon /></div>
                                        <span className="ml-[6px] tracking-[-0.1px]">TagDressup003</span>
                                    </div>
                                    <div className="h-[19px] flex items-center pl-[89px] text-[#2f2f2f]">
                                        <Arrow />
                                        <div className="ml-[6px]"><DressIcon /></div>
                                        <span className="ml-[6px] tracking-[-0.1px]">DogboneDressup002</span>
                                    </div>
                                    <div className="h-[19px] flex items-center pl-[123px] text-[#2f2f2f]">
                                        <ProfileIcon />
                                        <span className="ml-[6px]">Profile_Edges</span>
                                    </div>
                                    <div className="h-[19px] flex items-center pl-[62px] text-[#2f2f2f]">
                                        <SlabIcon />
                                        <span className="ml-[6px]">Base-Cut065</span>
                                    </div>
                                    <div className="h-[19px] flex items-center pl-[64px] text-[#2f2f2f]">
                                        <BlockIcon />
                                        <span className="ml-[7px]">Stock002</span>
                                    </div>
                                    <div className="h-[19px] flex items-center pl-[62px] text-[#8f8f8b]">
                                        <SheetIcon />
                                        <span className="ml-[7px]">SetupSheet002</span>
                                    </div>
                                </div>
                                {/* scrollbar */}
                                <div className="flex-1 flex flex-col items-center bg-[#f2f2ef] border-l border-[#d2d2cd] pt-[2px] pb-[2px]">
                                    <div className="h-[10px] flex items-center">
                                        <div className="w-0 h-0 border-l-[3px] border-r-[3px] border-b-[4px] border-l-transparent border-r-transparent border-b-[#66665f]" />
                                    </div>
                                    <div className="mt-[213px] w-[12px] h-[141px] rounded-[6px] border border-[#a8a8a2] bg-[#ecece8] flex flex-col items-center justify-center gap-[2px]">
                                        <div className="w-[6px] h-px bg-[#a8a8a2]" />
                                        <div className="w-[6px] h-px bg-[#a8a8a2]" />
                                        <div className="w-[6px] h-px bg-[#a8a8a2]" />
                                    </div>
                                    <div className="mt-[2px] h-[10px] flex items-center">
                                        <div className="w-0 h-0 border-l-[3px] border-r-[3px] border-t-[4px] border-l-transparent border-r-transparent border-t-[#66665f]" />
                                    </div>
                                </div>
                            </div>
                            {/* splitter */}
                            <div className="h-[7px] shrink-0 flex items-center justify-center gap-[2px] pr-[8px]">
                                <div className="w-px h-[4px] bg-[#b5b5af]" /><div className="w-px h-[4px] bg-[#b5b5af]" /><div className="w-px h-[4px] bg-[#b5b5af]" />
                            </div>
                            {/* property panel */}
                            <div className="ml-[2px] w-[506px] flex-1 min-h-0 flex flex-col border border-[#bcbcb6] rounded-[3px] mb-px">
                                <div className="ml-[1px] mr-[3px] mt-[1px] h-[414px] shrink-0 flex flex-col bg-white border border-[#c8c8c2]">
                                    <div className="h-[25px] shrink-0 flex bg-gradient-to-b from-[#fafaf8] to-[#f0f0ec] border-b border-[#b3b3ad]">
                                        <div className="w-[101px] flex items-center pl-[4px] border-r border-[#c8c8c2]">Property</div>
                                        <div className="flex items-center pl-[4px]">Value</div>
                                    </div>
                                </div>
                                <div className="flex items-start">
                                    <div className="w-[49px] h-[26px] pr-[2px] flex items-center justify-center rounded-b-[4px] bg-[#e6e6e1] border border-t-0 border-[#c4c4be]">View</div>
                                    <div className="w-[46px] h-[29px] flex items-center justify-center rounded-b-[4px] bg-[#f7f7f4] border border-t-0 border-[#c4c4be]">Data</div>
                                </div>
                            </div>
                        </div>

                        {/* 3d view + mdi tabs */}
                        <div className="flex-1 min-w-0 flex flex-col">
                            <div className="flex-1 min-h-0"><Viewport /></div>
                            <div className="h-[32px] shrink-0 flex items-start pl-[1px] text-[14px] text-[#3c3c3c] border-t border-[#c8c8c2]">
                                <div className="w-[136px] h-[29px] flex items-center pl-[5px] bg-[#e9e9e5] border border-t-0 border-[#c8c8c2] rounded-b-[4px]">
                                    <FcLogo size={18} />
                                    <span className="ml-[7px] w-[79px] whitespace-nowrap">Start page</span>
                                    <span className="text-[17px] leading-none font-bold text-[#444]">✖</span>
                                </div>
                                <div className="w-[186px] h-[31px] flex items-center pl-[4px] bg-[#f7f7f4] border border-t-0 border-[#c8c8c2] rounded-b-[4px]">
                                    <FcLogo size={18} />
                                    <span className="ml-[7px] w-[129px] whitespace-nowrap">5 - gcode_only : 1*</span>
                                    <span className="ml-[2px] text-[17px] leading-none font-bold text-[#444]">✖</span>
                                </div>
                            </div>
                        </div>
                    </div>

                    {/* status bar */}
                    <div className="h-[33px] shrink-0 flex items-center border-t border-[#d0d0ca] text-[14.4px] text-[#3c3c3c] pl-[6px] pr-[2px]">
                        <span className="flex-1 whitespace-nowrap">Preselected: Base-Cut065 - ____gcode_only.Clone005.Face4 (4333.64, 1510.83, -1.40671e-13)</span>
                        <svg width="11" height="14" viewBox="0 0 11 14">
                            <rect x="1" y="1" width="9" height="12" rx="4" fill="none" stroke="#333" strokeWidth="1.5" />
                            <path d="M5.5 3 V6" stroke="#333" strokeWidth="1.5" />
                        </svg>
                        <span className="ml-[6px] w-[53px]">Blender</span>
                        <div className="ml-[5px] w-0 h-0 border-l-[4px] border-r-[4px] border-t-[5px] border-l-transparent border-r-transparent border-t-[#77776f]" />
                        <span className="ml-[13px] text-[13.9px]">8492,39 mm x 5354,72 mm</span>
                    </div>
                </div>
            </div>
        </div>
    );
}
